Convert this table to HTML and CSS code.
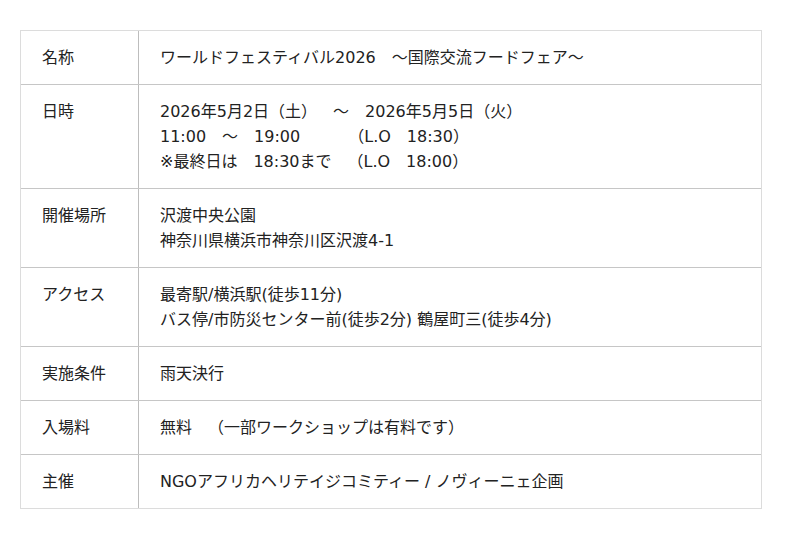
FILE: index.html
```html
<!DOCTYPE html>
<html lang="ja">
<head>
<meta charset="utf-8">
<title>ワールドフェスティバル2026</title>
<link rel="stylesheet" href="styles.css">
</head>
<body>
<div class="info">
  <div class="row">
    <div class="label">名称</div>
    <div class="value">ワールドフェスティバル2026　～国際交流フードフェア～</div>
  </div>
  <div class="row">
    <div class="label">日時</div>
    <div class="value">2026年5月2日（土）　～　2026年5月5日（火）<br>11:00　～　19:00　　　（L.O　18:30）<br>※最終日は　18:30まで　（L.O　18:00）</div>
  </div>
  <div class="row">
    <div class="label">開催場所</div>
    <div class="value">沢渡中央公園<br>神奈川県横浜市神奈川区沢渡4-1</div>
  </div>
  <div class="row">
    <div class="label">アクセス</div>
    <div class="value">最寄駅/横浜駅(徒歩11分)<br>バス停/市防災センター前(徒歩2分) 鶴屋町三(徒歩4分)</div>
  </div>
  <div class="row">
    <div class="label">実施条件</div>
    <div class="value">雨天決行</div>
  </div>
  <div class="row">
    <div class="label">入場料</div>
    <div class="value">無料　（一部ワークショップは有料です）</div>
  </div>
  <div class="row">
    <div class="label">主催</div>
    <div class="value">NGOアフリカヘリテイジコミティー / ノヴィーニェ企画</div>
  </div>
</div>
</body>
</html>
```
FILE: styles.css
```css
html, body {
  margin: 0;
  padding: 0;
  background: #fff;
}
body {
  font-family: "DejaVu Sans", "Noto Sans CJK JP", sans-serif;
  font-size: 16px;
  line-height: 25px;
  color: #222;
  text-spacing-trim: space-all;
}
.info {
  box-sizing: border-box;
  width: 742px;
  margin: 30px 0 0 20px;
  border: 1px solid #dcdcdc;
}
.row {
  display: grid;
  grid-template-columns: 118px 1fr;
  border-bottom: 1px solid #c6c6c6;
}
.row:last-child {
  border-bottom: none;
}
.label {
  box-sizing: border-box;
  padding: 14px 21px;
  border-right: 1px solid #bdbdbd;
  white-space: nowrap;
}
.value {
  padding: 14px 21px;
  white-space: nowrap;
}
```
